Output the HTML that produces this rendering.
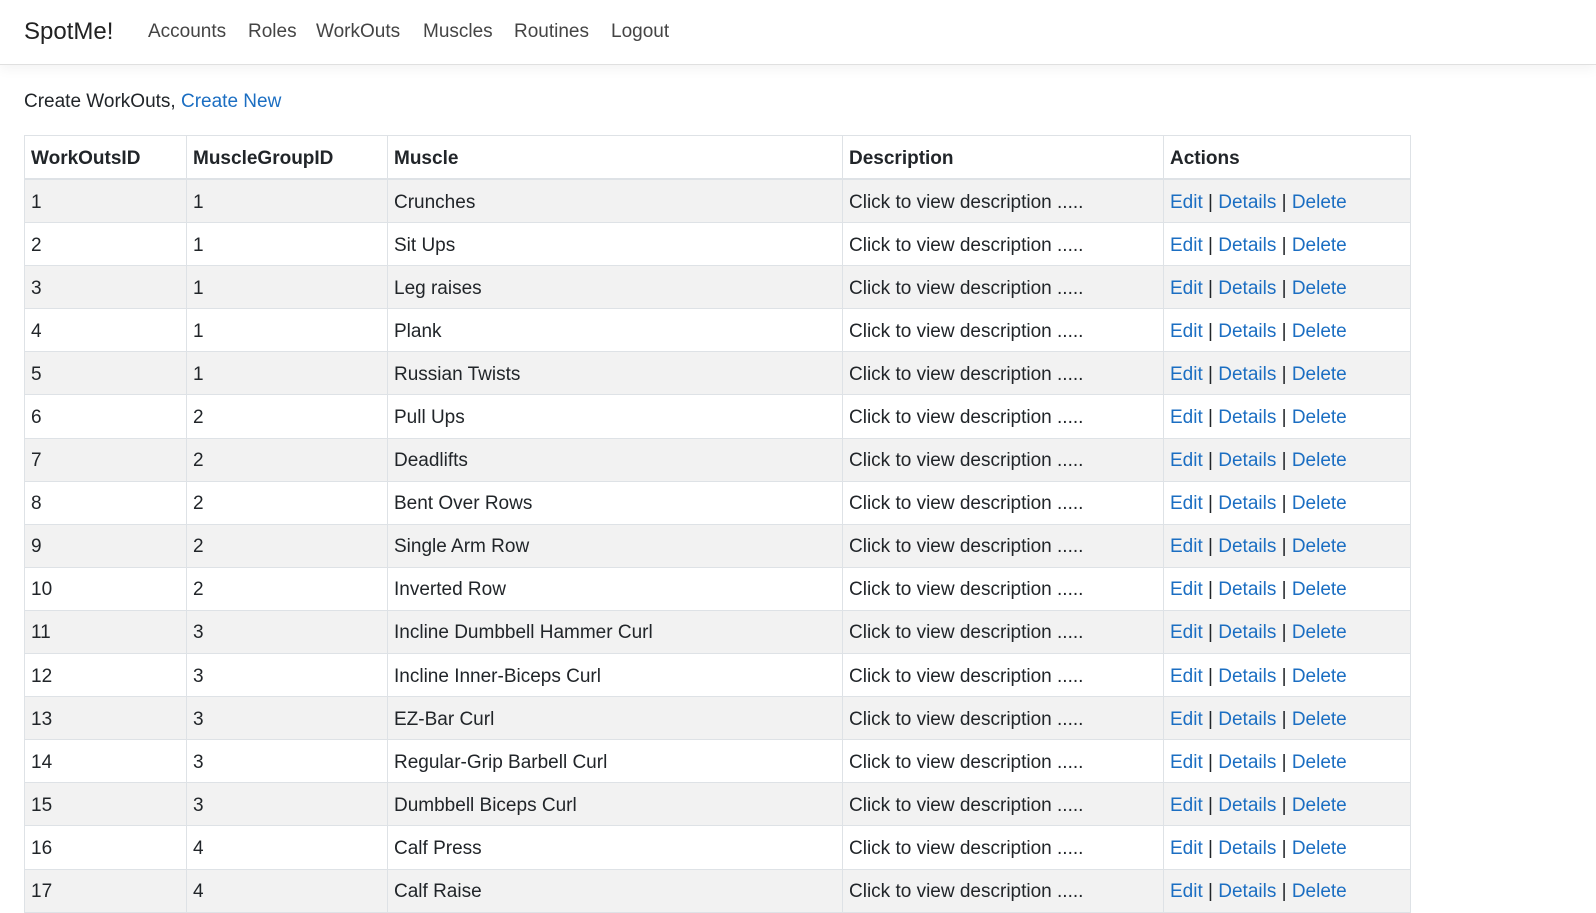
<!DOCTYPE html>
<html><head><meta charset="utf-8"><style>
body{margin:0;background:#fff;font-family:"Liberation Sans",sans-serif;color:#212529;width:1596px;height:871px;overflow:hidden}
.nav{height:64px;border-bottom:1px solid #e0e0e0;box-shadow:0 4px 12px rgba(0,0,0,.05);position:relative}
.brand{position:absolute;left:24px;top:18px;font-size:24px;color:#222}
.nav span{position:absolute;top:21px;font-size:19px;color:#444}
.intro{position:absolute;left:24px;top:91px;font-size:19px}
a{color:#1b6ec2;text-decoration:none}
table{position:absolute;left:24px;top:135px;border-collapse:collapse;font-size:19px;table-layout:fixed;width:1386px}
td,th{border:1px solid #dee2e6;padding:3px 6px 0;height:39.1px;text-align:left;white-space:nowrap;overflow:hidden}
th{height:39px;border-bottom:2px solid #dee2e6;font-weight:bold}
tbody tr:nth-child(odd){background:#f2f2f2}
</style></head><body>
<div class="nav"><div class="brand">SpotMe!</div>
<span style="left:148px">Accounts</span><span style="left:248px">Roles</span><span style="left:316px">WorkOuts</span><span style="left:423px">Muscles</span><span style="left:514px">Routines</span><span style="left:611px">Logout</span></div>
<div class="intro">Create WorkOuts, <a>Create New</a></div>
<table>
<colgroup><col style="width:162px"><col style="width:201px"><col style="width:455px"><col style="width:321px"><col style="width:247px"></colgroup>
<thead><tr><th>WorkOutsID</th><th>MuscleGroupID</th><th>Muscle</th><th>Description</th><th>Actions</th></tr></thead>
<tbody>
<tr><td>1</td><td>1</td><td>Crunches</td><td>Click to view description .....</td><td><a>Edit</a> | <a>Details</a> | <a>Delete</a></td></tr>
<tr><td>2</td><td>1</td><td>Sit Ups</td><td>Click to view description .....</td><td><a>Edit</a> | <a>Details</a> | <a>Delete</a></td></tr>
<tr><td>3</td><td>1</td><td>Leg raises</td><td>Click to view description .....</td><td><a>Edit</a> | <a>Details</a> | <a>Delete</a></td></tr>
<tr><td>4</td><td>1</td><td>Plank</td><td>Click to view description .....</td><td><a>Edit</a> | <a>Details</a> | <a>Delete</a></td></tr>
<tr><td>5</td><td>1</td><td>Russian Twists</td><td>Click to view description .....</td><td><a>Edit</a> | <a>Details</a> | <a>Delete</a></td></tr>
<tr><td>6</td><td>2</td><td>Pull Ups</td><td>Click to view description .....</td><td><a>Edit</a> | <a>Details</a> | <a>Delete</a></td></tr>
<tr><td>7</td><td>2</td><td>Deadlifts</td><td>Click to view description .....</td><td><a>Edit</a> | <a>Details</a> | <a>Delete</a></td></tr>
<tr><td>8</td><td>2</td><td>Bent Over Rows</td><td>Click to view description .....</td><td><a>Edit</a> | <a>Details</a> | <a>Delete</a></td></tr>
<tr><td>9</td><td>2</td><td>Single Arm Row</td><td>Click to view description .....</td><td><a>Edit</a> | <a>Details</a> | <a>Delete</a></td></tr>
<tr><td>10</td><td>2</td><td>Inverted Row</td><td>Click to view description .....</td><td><a>Edit</a> | <a>Details</a> | <a>Delete</a></td></tr>
<tr><td>11</td><td>3</td><td>Incline Dumbbell Hammer Curl</td><td>Click to view description .....</td><td><a>Edit</a> | <a>Details</a> | <a>Delete</a></td></tr>
<tr><td>12</td><td>3</td><td>Incline Inner-Biceps Curl</td><td>Click to view description .....</td><td><a>Edit</a> | <a>Details</a> | <a>Delete</a></td></tr>
<tr><td>13</td><td>3</td><td>EZ-Bar Curl</td><td>Click to view description .....</td><td><a>Edit</a> | <a>Details</a> | <a>Delete</a></td></tr>
<tr><td>14</td><td>3</td><td>Regular-Grip Barbell Curl</td><td>Click to view description .....</td><td><a>Edit</a> | <a>Details</a> | <a>Delete</a></td></tr>
<tr><td>15</td><td>3</td><td>Dumbbell Biceps Curl</td><td>Click to view description .....</td><td><a>Edit</a> | <a>Details</a> | <a>Delete</a></td></tr>
<tr><td>16</td><td>4</td><td>Calf Press</td><td>Click to view description .....</td><td><a>Edit</a> | <a>Details</a> | <a>Delete</a></td></tr>
<tr><td>17</td><td>4</td><td>Calf Raise</td><td>Click to view description .....</td><td><a>Edit</a> | <a>Details</a> | <a>Delete</a></td></tr>
</tbody></table>
</body></html>
